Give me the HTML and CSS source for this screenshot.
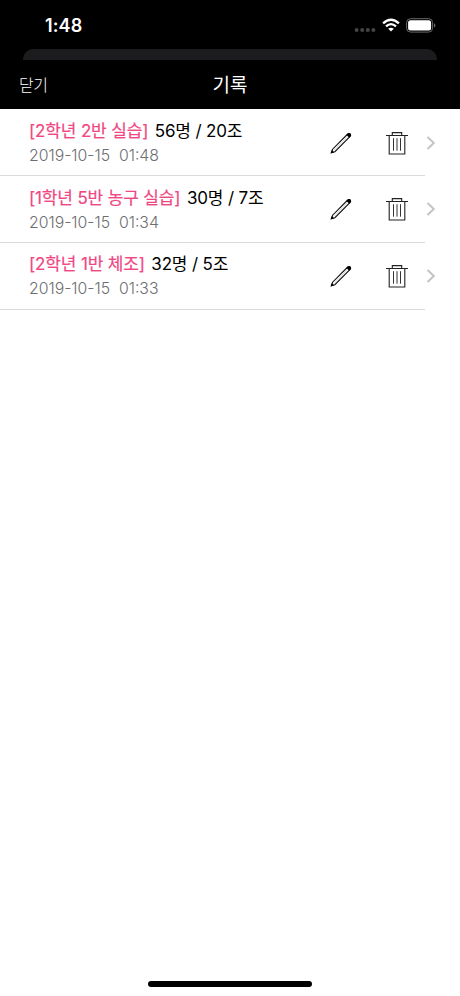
FILE: index.html
```html
<!DOCTYPE html>
<html lang="ko">
<head>
<meta charset="utf-8">
<title>기록</title>
<link rel="stylesheet" href="styles.css">
</head>
<body>
<svg class="defs" aria-hidden="true">
  <symbol id="pencil" viewBox="0 0 24 24">
    <path d="M2.4 21.7 3.6 18.2 18.7 3Q20 1.9 21.2 3 22.2 4.2 21.1 5.5L5.9 20.7Z" fill="#fff" stroke="#111" stroke-width="1.1"/>
    <path d="M17.4 3.9 18.6 2.7Q20.1 1.5 21.5 2.7 22.8 4.1 21.5 5.5L20.3 6.7ZM1.6 22.5 2.8 19 5.1 21.3Z" fill="#000"/>
    <path d="M5 19.4 18.1 6.2" stroke="#aaa" stroke-width=".5"/>
  </symbol>
  <symbol id="trash" viewBox="0 0 24 24">
    <path d="M1 4.5H23M4.2 4.5V23H19.8V4.5M7.3 4.2V1.6H16.7V4.2" fill="none" stroke="#222" stroke-width="1.1"/>
    <path d="M8.5 7.2V19.7M12 7.2V19.7M15.5 7.2V19.7" stroke="#333" stroke-width="1"/>
  </symbol>
  <symbol id="chevron" viewBox="0 0 10 16">
    <path d="M1.5 2 7.8 8 1.5 14" fill="none" stroke="#c4c4c6" stroke-width="2"/>
  </symbol>
</svg>
<header class="top">
  <div class="status">
    <span class="clock">1:48</span>
    <div class="signals">
      <svg class="dots" viewBox="0 0 22 6" fill="#444446"><circle cx="2.6" cy="3" r="2"/><circle cx="8.2" cy="3" r="2"/><circle cx="13.8" cy="3" r="2"/><circle cx="19.4" cy="3" r="2"/></svg>
      <svg class="wifi" viewBox="0 0 18 14" fill="none" stroke="#fff" stroke-width="2.3"><path d="M1.1 5.4Q9-2 16.9 5.4M4 8.4Q9 3.9 14 8.4"/><path d="M6.2 10.7Q9 8.6 11.8 10.7L9 13.5Z" fill="#fff" stroke="none"/></svg>
      <svg class="battery" viewBox="0 0 30 15"><rect x=".6" y=".7" width="26" height="13.4" rx="4" fill="none" stroke="#69696b"/><rect x="2.1" y="2.2" width="23" height="10.4" rx="2.5" fill="#fff"/><path d="M28 5.2Q29.4 5.8 29.4 7.4T28 9.6Z" fill="#69696b"/></svg>
    </div>
  </div>
  <div class="sheet"></div>
  <nav class="nav">
    <span class="close">닫기</span>
    <h1 class="title">기록</h1>
  </nav>
</header>
<main class="list">
  <article class="row">
    <div class="info">
      <p class="line"><span class="tag">[2학년 2반 실습]</span><span class="count">56명 / 20조</span></p>
      <p class="date">2019-10-15&nbsp; 01:48</p>
    </div>
    <svg class="pencil"><use href="#pencil"/></svg>
    <svg class="trash"><use href="#trash"/></svg>
    <svg class="chevron"><use href="#chevron"/></svg>
  </article>
  <article class="row">
    <div class="info">
      <p class="line"><span class="tag">[1학년 5반 농구 실습]</span><span class="count">30명 / 7조</span></p>
      <p class="date">2019-10-15&nbsp; 01:34</p>
    </div>
    <svg class="pencil"><use href="#pencil"/></svg>
    <svg class="trash"><use href="#trash"/></svg>
    <svg class="chevron"><use href="#chevron"/></svg>
  </article>
  <article class="row">
    <div class="info">
      <p class="line"><span class="tag">[2학년 1반 체조]</span><span class="count">32명 / 5조</span></p>
      <p class="date">2019-10-15&nbsp; 01:33</p>
    </div>
    <svg class="pencil"><use href="#pencil"/></svg>
    <svg class="trash"><use href="#trash"/></svg>
    <svg class="chevron"><use href="#chevron"/></svg>
  </article>
</main>
<footer class="foot"><div class="home"></div></footer>
</body>
</html>
```
FILE: styles.css
```css
* { box-sizing: border-box; margin: 0; padding: 0; }
body {
  display: flex;
  flex-direction: column;
  height: 996px;
  background: #fff;
  color: #000;
  font-family: Inter, "Noto Sans CJK KR", sans-serif;
}
svg { display: block; flex: none; }
.defs { position: absolute; width: 0; height: 0; }
.top { height: 109px; background: #000; color: #fff; }
.status {
  display: flex;
  justify-content: space-between;
  height: 49px;
  padding: 14px 24px 0 45px;
}
.clock { font-size: 18px; font-weight: 600; line-height: 24px; letter-spacing: .1px; }
.signals { display: flex; }
.dots { width: 22px; height: 6px; margin: 13px 6px 0 0; }
.wifi { width: 18px; height: 14px; margin: 4px 6px 0 0; }
.battery { width: 30px; height: 15px; margin-top: 4px; }
.sheet { height: 11px; margin: 0 23px; background: #1c1c1e; border-radius: 10px 10px 0 0; }
.nav {
  display: grid;
  grid-template-columns: 1fr auto 1fr;
  align-items: center;
  height: 49px;
  padding: 1px 19px 0;
}
.close { font-size: 16px; font-weight: 300; line-height: 24px; letter-spacing: -.5px; }
.title { padding-top: 2px; font-size: 19px; font-weight: 400; line-height: 28px; }
.list { flex: 1; padding-top: .3px; }
.row {
  display: grid;
  grid-template-columns: 300px 56px 41px 10px;
  align-items: center;
  height: 66.75px;
  padding-left: 29px;
  background: linear-gradient(#dadadc, #dadadc) left bottom / 425px 1px no-repeat;
}
.info { align-self: start; padding-top: 9.5px; }
.line { display: flex; gap: 6.5px; font-size: 17px; line-height: 25px; letter-spacing: -.15px; white-space: nowrap; }
.tag { color: #ef4783; -webkit-text-stroke: .2px #ef4783; }
.date { color: #6e6e70; font-size: 15.8px; font-weight: 300; line-height: 24px; }
.pencil, .trash { width: 24px; height: 24px; }
.chevron { width: 10px; height: 16px; }
.foot { display: flex; justify-content: center; height: 15px; }
.home { width: 164px; height: 6px; background: #000; border-radius: 3px; }
```
